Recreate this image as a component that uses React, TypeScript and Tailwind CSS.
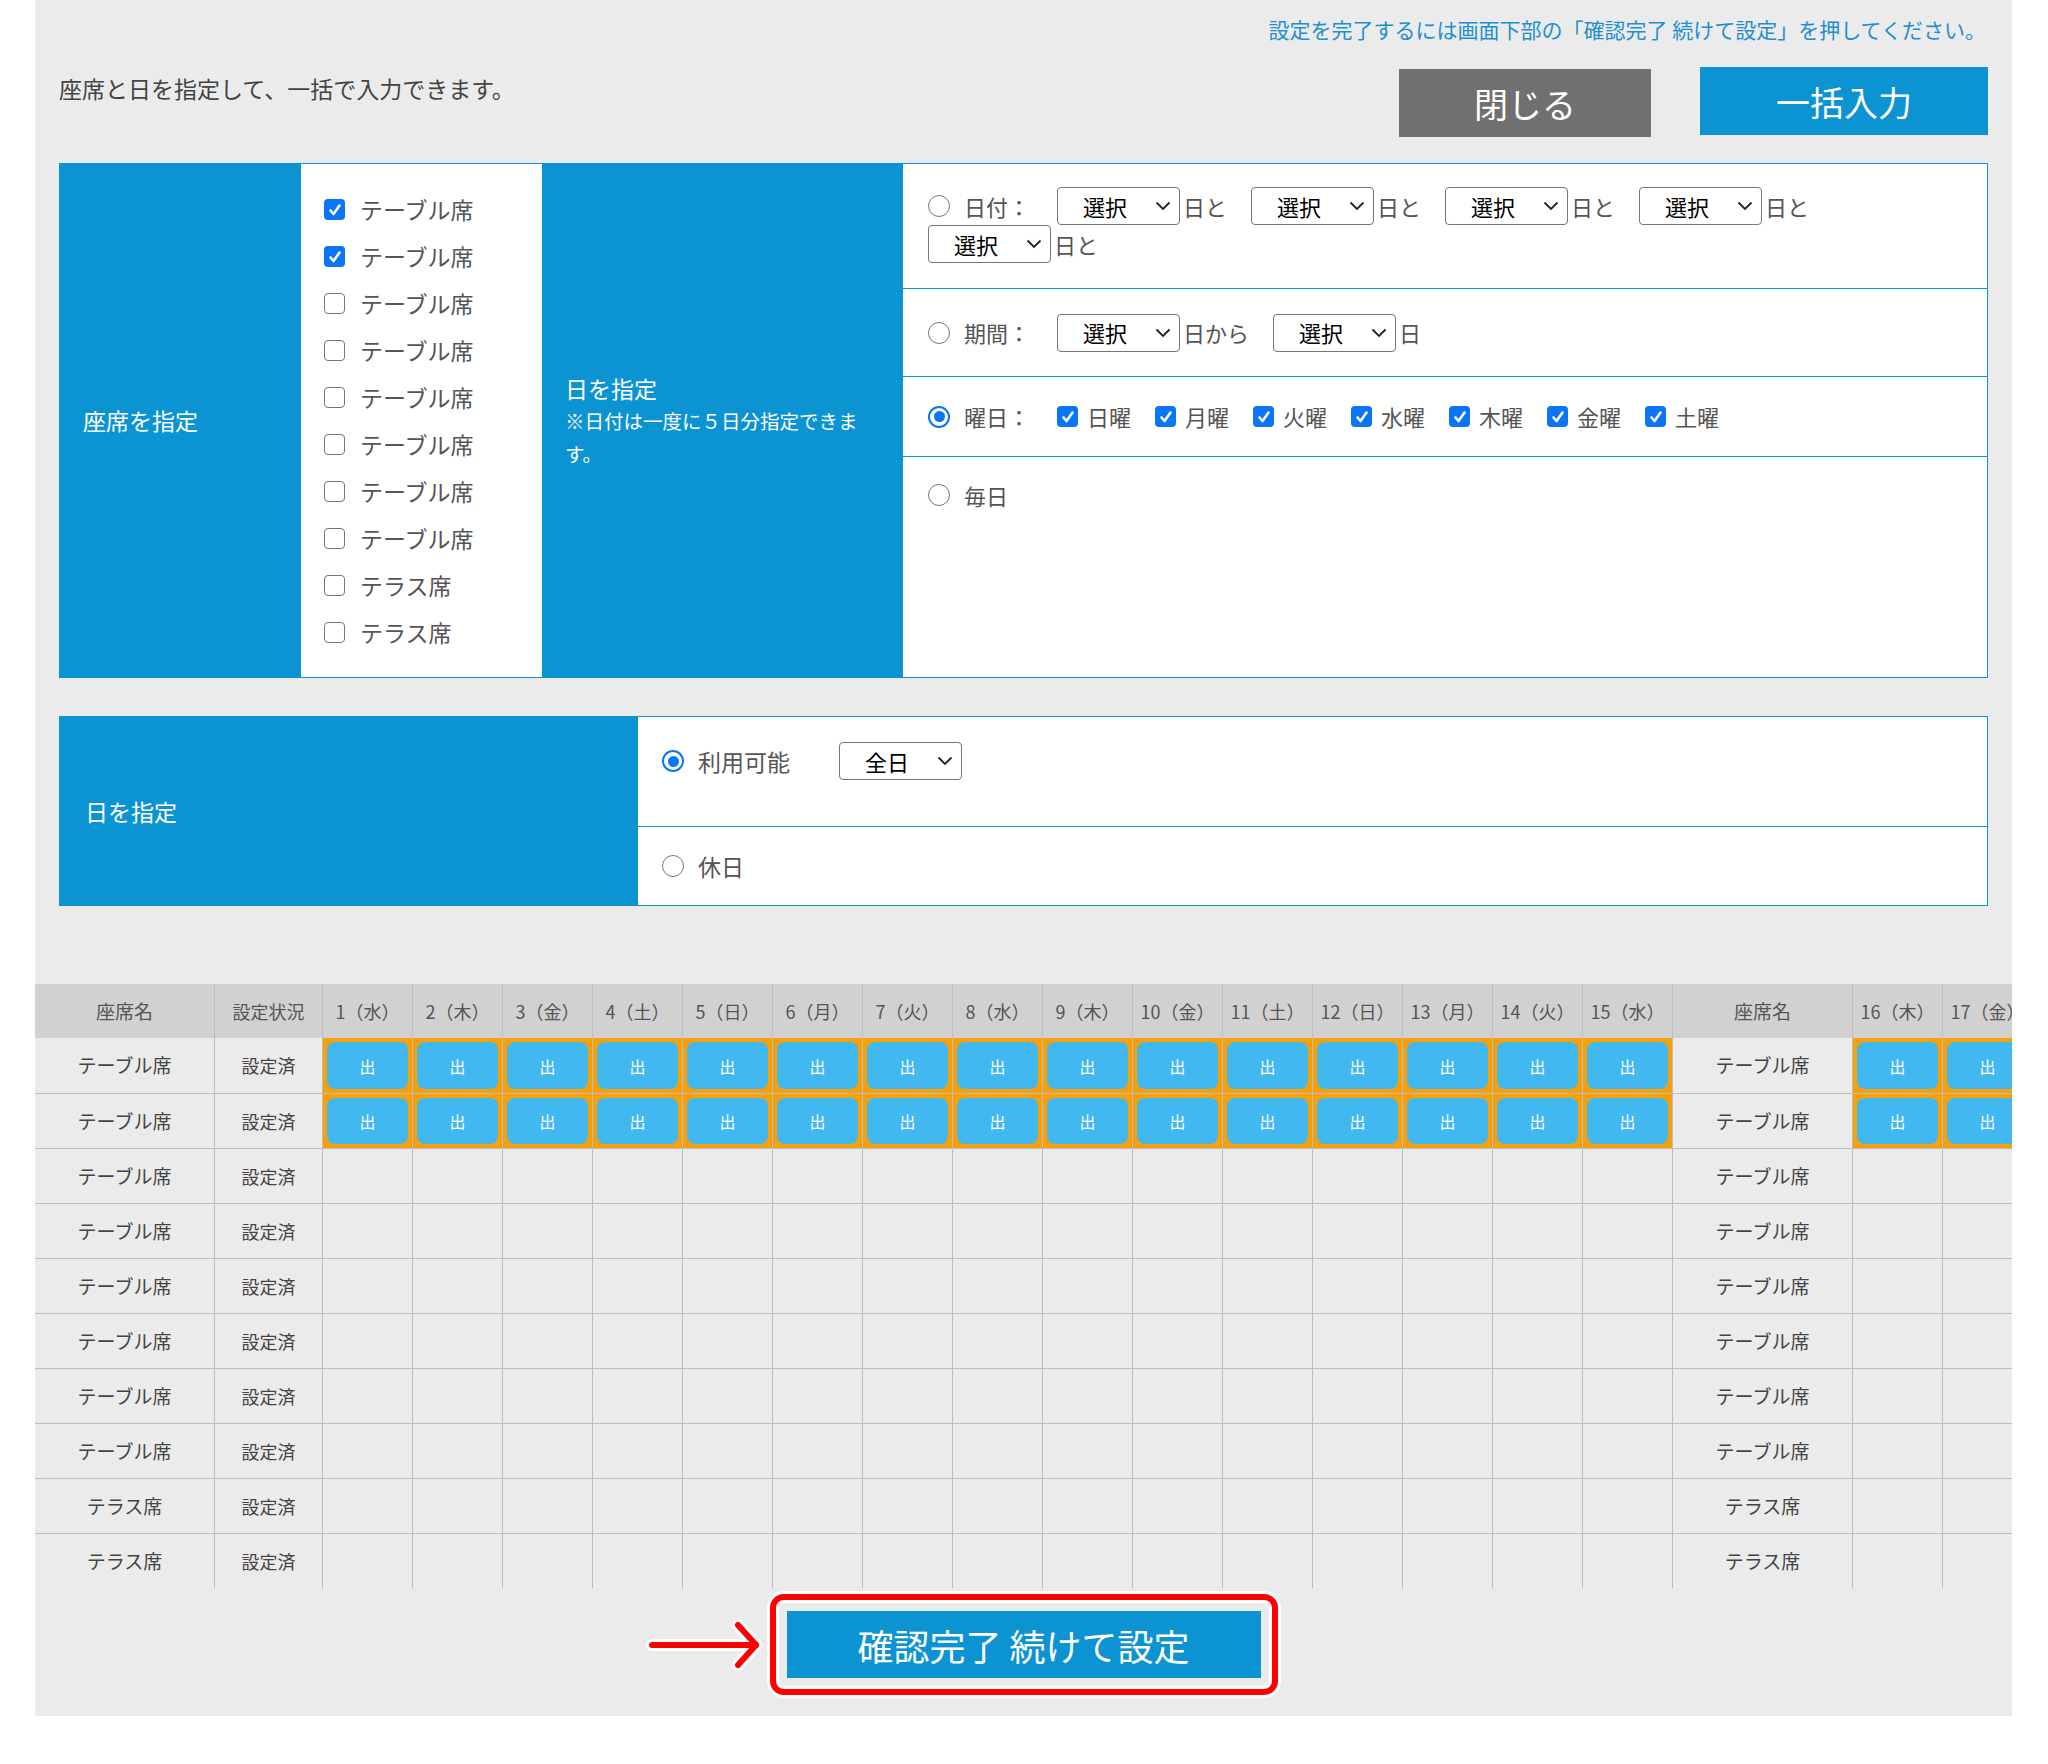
import React from 'react';

const FONT = { fontFamily: '"Noto Sans CJK JP", "Noto Sans", sans-serif' };

function Radio({ checked = false }: { checked?: boolean }) {
  if (checked) {
    return (
      <span className="w-[22px] h-[22px] rounded-full border-[2.5px] border-[#0a75f5] bg-white flex items-center justify-center shrink-0">
        <span className="w-[11px] h-[11px] rounded-full bg-[#0a75f5]" />
      </span>
    );
  }
  return <span className="w-[22px] h-[22px] rounded-full border-[1.5px] border-[#767676] bg-white shrink-0" />;
}

function Check({ checked = false }: { checked?: boolean }) {
  if (checked) {
    return (
      <span className="w-[21px] h-[21px] rounded-[4px] bg-[#0a75f5] flex items-center justify-center shrink-0">
        <svg width="14" height="14" viewBox="0 0 14 14" fill="none">
          <path d="M2.5 7.5 L5.5 11 L11.5 2.5" stroke="white" strokeWidth="2.6" strokeLinecap="round" strokeLinejoin="round" />
        </svg>
      </span>
    );
  }
  return <span className="w-[21px] h-[21px] rounded-[4px] border-[1.5px] border-[#767676] bg-white shrink-0" />;
}

function Select({ label }: { label: string }) {
  return (
    <span className="w-[123px] h-[38px] border border-[#767676] rounded-[4px] bg-white flex items-center justify-between pl-[25px] pr-[8px] text-[22px] text-black shrink-0">
      <span>{label}</span>
      <svg width="16" height="10" viewBox="0 0 16 10" fill="none">
        <path d="M1.5 1.5 L8 8 L14.5 1.5" stroke="#222" strokeWidth="1.8" />
      </svg>
    </span>
  );
}

const seats = [
  'テーブル席', 'テーブル席', 'テーブル席', 'テーブル席', 'テーブル席',
  'テーブル席', 'テーブル席', 'テーブル席', 'テラス席', 'テラス席',
];

const days1 = ['1（水）', '2（木）', '3（金）', '4（土）', '5（日）', '6（月）', '7（火）', '8（水）', '9（木）', '10（金）', '11（土）', '12（日）', '13（月）', '14（火）', '15（水）'];
const days2 = ['16（木）', '17（金）'];
const weekdays = ['日曜', '月曜', '火曜', '水曜', '木曜', '金曜', '土曜'];

function DayCell({ on }: { on: boolean }) {
  if (!on) return <div className="w-[90px] h-full shrink-0 border-r border-[#bdbdbd]" />;
  return (
    <div className="w-[90px] h-full shrink-0 border-r border-[#bdbdbd] bg-[#f6a00c] p-[4px]">
      <div className="w-full h-full rounded-[8px] bg-[#41b8ef] flex items-center justify-center text-white text-[16px]">出</div>
    </div>
  );
}

export default function App() {
  return (
    <div className="w-[2048px] bg-white" style={FONT}>
      <div className="ml-[35px] w-[1977px] bg-[#ebebeb] overflow-hidden pt-[15px] pb-[21px]">
        {/* header */}
        <div className="px-[24px]">
          <p className="text-right text-[21px] leading-[28px] text-[#1e8fcf] pr-[2px]">
            設定を完了するには画面下部の「確認完了 続けて設定」を押してください。
          </p>
          <div className="flex items-start justify-between mt-[24px]">
            <p className="mt-[5px] text-[23px] leading-[32px] text-[#444]">座席と日を指定して、一括で入力できます。</p>
            <div className="flex items-start gap-[49px]">
              <button className="mt-[2px] w-[252px] h-[68px] bg-[#707070] text-white text-[34px]">閉じる</button>
              <button className="w-[288px] h-[68px] bg-[#0c93d2] text-white text-[34px]">一括入力</button>
            </div>
          </div>

          {/* panel 1 */}
          <div className="mt-[26px] h-[515px] border border-[#0c93d2] flex">
            <div className="w-[241px] bg-[#0c93d2] flex items-center pl-[23px] text-white text-[23px]">座席を指定</div>
            <div className="w-[241px] bg-white pl-[23px] pt-[22px]">
              {seats.map((s, i) => (
                <div key={i} className="h-[47px] flex items-center gap-[15px] text-[23px] text-[#555]">
                  <Check checked={i < 2} />
                  <span>{s}</span>
                </div>
              ))}
            </div>
            <div className="w-[361px] bg-[#0c93d2] flex flex-col justify-center pl-[23px] pr-[36px] text-white">
              <p className="text-[23px] leading-[32px]">日を指定</p>
              <p className="text-[19.5px] leading-[33px]">※日付は一度に５日分指定できます。</p>
            </div>
            <div className="flex-1 bg-white flex flex-col text-[22px] text-[#555]">
              <div className="h-[125px] border-b border-[#0c93d2] pl-[25px] pr-[20px] pt-[23px]">
                <div className="flex flex-wrap items-center">
                  <span className="flex items-center h-[38px]">
                    <Radio />
                    <span className="ml-[14px] w-[93px]">日付：</span>
                  </span>
                  {[0, 1, 2, 3, 4].map((k) => (
                    <span key={k} className="flex items-center h-[38px] mr-[24px]">
                      <Select label="選択" />
                      <span className="ml-[3px]">日と</span>
                    </span>
                  ))}
                </div>
              </div>
              <div className="h-[88px] border-b border-[#0c93d2] pl-[25px] flex items-center">
                <Radio />
                <span className="ml-[14px] w-[93px]">期間：</span>
                <Select label="選択" />
                <span className="ml-[3px] mr-[24px]">日から</span>
                <Select label="選択" />
                <span className="ml-[3px]">日</span>
              </div>
              <div className="h-[80px] border-b border-[#0c93d2] pl-[25px] flex items-center">
                <Radio checked />
                <span className="ml-[14px] w-[93px]">曜日：</span>
                {weekdays.map((w) => (
                  <span key={w} className="flex items-center mr-[24px]">
                    <Check checked />
                    <span className="ml-[9px]">{w}</span>
                  </span>
                ))}
              </div>
              <div className="flex-1 pl-[25px] pt-[24px]">
                <div className="flex items-center h-[28px]">
                  <Radio />
                  <span className="ml-[14px]">毎日</span>
                </div>
              </div>
            </div>
          </div>

          {/* panel 2 */}
          <div className="mt-[38px] h-[190px] border border-[#0c93d2] flex">
            <div className="w-[578px] bg-[#0c93d2] flex items-center pl-[25px] text-white text-[23px]">日を指定</div>
            <div className="flex-1 bg-white flex flex-col text-[23px] text-[#555]">
              <div className="h-[110px] border-b border-[#0c93d2] pl-[24px] pt-[25px]">
                <div className="flex items-center h-[38px]">
                  <Radio checked />
                  <span className="ml-[14px] w-[141px]">利用可能</span>
                  <Select label="全日" />
                </div>
              </div>
              <div className="flex-1 pl-[24px] flex items-center">
                <Radio />
                <span className="ml-[14px]">休日</span>
              </div>
            </div>
          </div>
        </div>

        {/* table */}
        <div className="mt-[78px] w-[2000px] text-[18px]">
          <div className="flex h-[54px] bg-[#d1d1d1] text-[#555]">
            <div className="w-[180px] shrink-0 border-r border-[#bdbdbd] flex items-center justify-center text-[19px]">座席名</div>
            <div className="w-[108px] shrink-0 border-r border-[#bdbdbd] flex items-center justify-center">設定状況</div>
            {days1.map((d) => (
              <div key={d} className="w-[90px] shrink-0 border-r border-[#bdbdbd] flex items-center justify-center whitespace-nowrap">{d}</div>
            ))}
            <div className="w-[180px] shrink-0 border-r border-[#bdbdbd] flex items-center justify-center text-[19px]">座席名</div>
            {days2.map((d) => (
              <div key={d} className="w-[90px] shrink-0 border-r border-[#bdbdbd] flex items-center justify-center whitespace-nowrap">{d}</div>
            ))}
          </div>
          {seats.map((s, i) => (
            <div key={i} className={`flex h-[55px] text-[#444] ${i > 0 ? 'border-t border-[#bdbdbd]' : ''}`}>
              <div className="w-[180px] shrink-0 border-r border-[#bdbdbd] flex items-center justify-center text-[19px]">{s}</div>
              <div className="w-[108px] shrink-0 border-r border-[#bdbdbd] flex items-center justify-center">設定済</div>
              {days1.map((d) => (
                <DayCell key={d} on={i < 2} />
              ))}
              <div className="w-[180px] shrink-0 border-r border-[#bdbdbd] flex items-center justify-center text-[19px]">{s}</div>
              {days2.map((d) => (
                <DayCell key={d} on={i < 2} />
              ))}
            </div>
          ))}
        </div>

        {/* confirm */}
        <div className="mt-[6px] flex justify-center">
          <div className="relative">
            <svg className="absolute right-full mr-[6px] top-1/2 -translate-y-1/2" width="120" height="56" viewBox="0 0 120 56" fill="none">
              <g stroke="white" strokeWidth="12" strokeLinecap="round" strokeLinejoin="round">
                <path d="M8 28 H112" />
                <path d="M94 8 L112 28 L94 48" />
              </g>
              <g stroke="#ff0000" strokeWidth="6" strokeLinecap="round" strokeLinejoin="round">
                <path d="M8 28 H112" />
                <path d="M94 8 L112 28 L94 48" />
              </g>
            </svg>
            <div className="border-[6px] border-[#ff0000] rounded-[14px] p-[11px] shadow-[0_0_0_3px_#ffffff,inset_0_0_0_3px_#ffffff]">
              <button className="w-[474px] h-[67px] bg-[#0c93d2] text-white text-[36px] flex items-center justify-center">確認完了 続けて設定</button>
            </div>
          </div>
        </div>
      </div>
    </div>
  );
}
